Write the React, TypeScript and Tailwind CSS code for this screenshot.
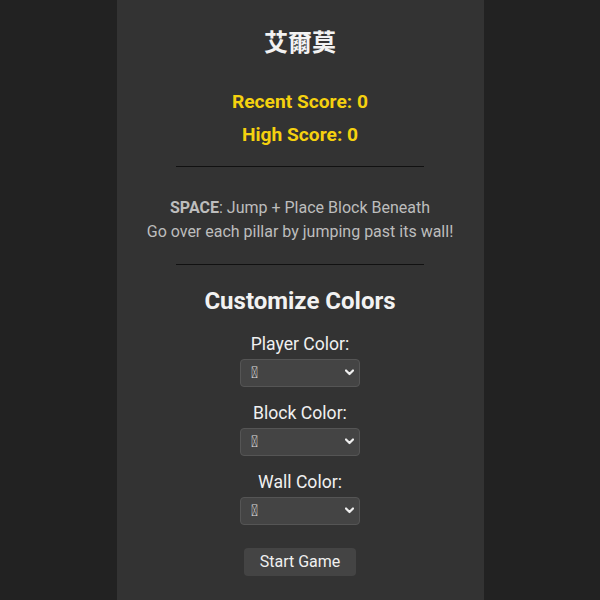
import React from "react";

function ColorSelect({ label }: { label: string }) {
  return (
    <div className="flex flex-col items-center">
      <label className="text-[17.6px] leading-6 text-[#f0f0f0]">{label}</label>
      <div className="relative mt-[3px] w-[120px]">
        <select className="h-[28px] w-[120px] appearance-none rounded-[4px] border border-[#555] bg-[#444] pl-[10px] text-[16px] text-[#ddd] outline-none">
          <option>{"\u{E000}"}</option>
        </select>
        <svg
          className="pointer-events-none absolute right-[6px] top-[10px]"
          width="9"
          height="7"
          viewBox="0 0 9 7"
        >
          <path d="M1 1.5 L4.5 5 L8 1.5" fill="none" stroke="#eee" strokeWidth="2.2" strokeLinecap="round" strokeLinejoin="round" />
        </svg>
      </div>
    </div>
  );
}

export default function App() {
  return (
    <div
      className="flex min-h-screen justify-center bg-[#222]"
      style={{ fontFamily: "Roboto, 'Noto Sans CJK TC', sans-serif" }}
    >
      <div className="flex w-[367px] flex-col items-center bg-[#333] pt-[27px] pb-10">
        <h1 className="text-[24px] font-bold leading-8 text-[#f2f2f2]">艾爾莫</h1>
        <p className="mt-[29px] text-[19.2px] font-bold leading-7 text-[#f5d10f]">Recent Score: 0</p>
        <p className="mt-[5px] text-[19.2px] font-bold leading-7 text-[#f5d10f]">High Score: 0</p>
        <div className="mt-[17px] h-px w-[248px] bg-[#111]" />
        <div className="mt-[29px] text-center text-[16px] leading-6 text-[#bdbdbd]">
          <p>
            <span className="font-bold">SPACE</span>: Jump + Place Block Beneath
          </p>
          <p>Go over each pillar by jumping past its wall!</p>
        </div>
        <div className="mt-[20px] h-px w-[248px] bg-[#111]" />
        <h2 className="mt-[20px] text-[24px] font-bold leading-8 text-[#f2f2f2]">Customize Colors</h2>
        <div className="mt-[15px] flex flex-col items-center gap-[14px]">
          <ColorSelect label="Player Color:" />
          <ColorSelect label="Block Color:" />
          <ColorSelect label="Wall Color:" />
        </div>
        <button className="mt-[23px] h-[28px] w-[112px] rounded-[4px] bg-[#444] text-[16px] text-[#f0f0f0]">
          Start Game
        </button>
      </div>
    </div>
  );
}
